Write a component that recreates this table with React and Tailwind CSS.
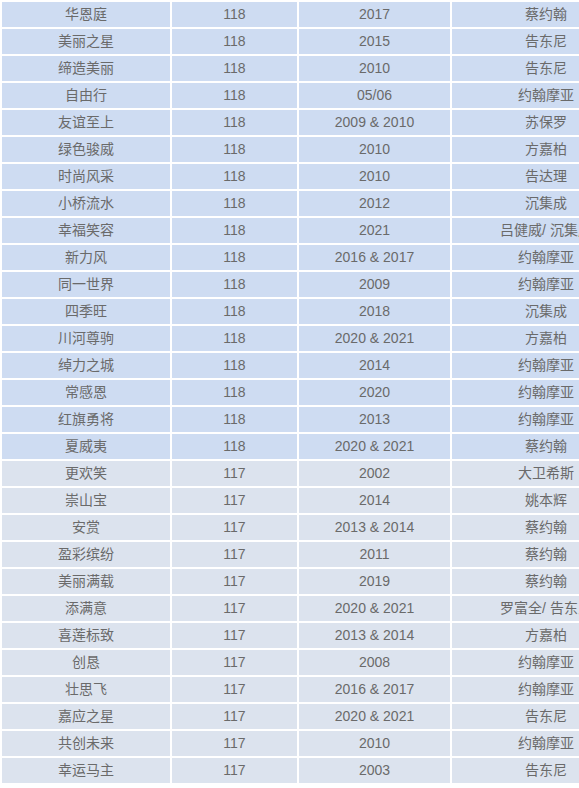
import React from 'react';

const rows = [
  ['华恩庭', '118', '2017', '蔡约翰'],
  ['美丽之星', '118', '2015', '告东尼'],
  ['缔造美丽', '118', '2010', '告东尼'],
  ['自由行', '118', '05/06', '约翰摩亚'],
  ['友谊至上', '118', '2009 & 2010', '苏保罗'],
  ['绿色骏威', '118', '2010', '方嘉柏'],
  ['时尚风采', '118', '2010', '告达理'],
  ['小桥流水', '118', '2012', '沉集成'],
  ['幸福笑容', '118', '2021', '吕健威/ 沉集成'],
  ['新力风', '118', '2016 & 2017', '约翰摩亚'],
  ['同一世界', '118', '2009', '约翰摩亚'],
  ['四季旺', '118', '2018', '沉集成'],
  ['川河尊驹', '118', '2020 & 2021', '方嘉柏'],
  ['绰力之城', '118', '2014', '约翰摩亚'],
  ['常感恩', '118', '2020', '约翰摩亚'],
  ['红旗勇将', '118', '2013', '约翰摩亚'],
  ['夏威夷', '118', '2020 & 2021', '蔡约翰'],
  ['更欢笑', '117', '2002', '大卫希斯'],
  ['崇山宝', '117', '2014', '姚本辉'],
  ['安赏', '117', '2013 & 2014', '蔡约翰'],
  ['盈彩缤纷', '117', '2011', '蔡约翰'],
  ['美丽满载', '117', '2019', '蔡约翰'],
  ['添满意', '117', '2020 & 2021', '罗富全/ 告东尼'],
  ['喜莲标致', '117', '2013 & 2014', '方嘉柏'],
  ['创恳', '117', '2008', '约翰摩亚'],
  ['壮思飞', '117', '2016 & 2017', '约翰摩亚'],
  ['嘉应之星', '117', '2020 & 2021', '告东尼'],
  ['共创未来', '117', '2010', '约翰摩亚'],
  ['幸运马主', '117', '2003', '告东尼'],
];

const App = () => {
  return (
    <div className="w-[579px] h-[788px] overflow-hidden bg-white">
      <div
        className="grid grid-cols-[168px_125px_151px_188px] gap-[2px] p-[2px] w-[640px] text-[14px] text-[#6a6a6a]"
        style={{ fontFamily: '"Liberation Sans", "Noto Sans CJK SC", sans-serif' }}
      >
        {rows.map((r, i) => {
          const bg = r[1] === '118' ? 'bg-[#cedcf2]' : 'bg-[#dce3ee]';
          return r.map((cell, j) => (
            <div
              key={`${i}-${j}`}
              className={`${bg} h-[25px] flex items-center justify-center whitespace-nowrap overflow-hidden`}
            >
              {cell}
            </div>
          ));
        })}
      </div>
    </div>
  );
};

export default App;
